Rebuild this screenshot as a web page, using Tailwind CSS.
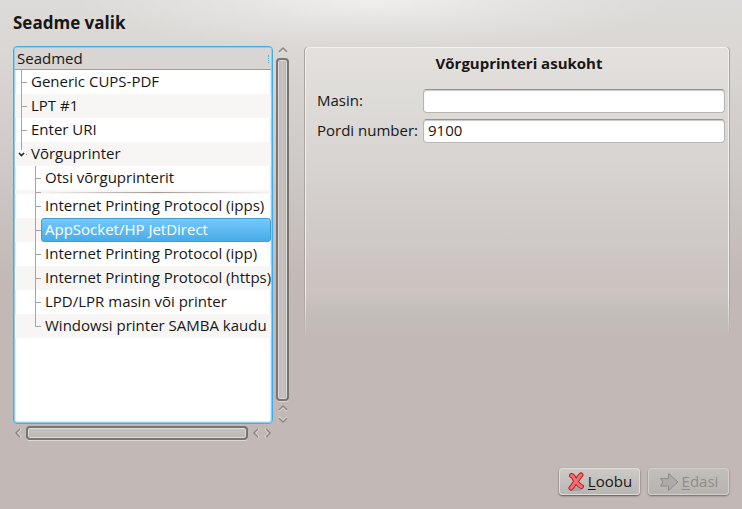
<!DOCTYPE html>
<html lang="et">
<head>
  <meta charset="UTF-8" />
  <meta name="viewport" content="width=device-width, initial-scale=1" />
  <title>Seadme valik</title>
  <script src="https://cdn.jsdelivr.net/npm/@tailwindcss/browser@4"></script>
  <style>
    body {
      font-family: 'Open Sans', 'Noto Sans', sans-serif;
      background:
        radial-gradient(ellipse 300px 50px at 50% 0, rgba(255, 255, 255, 0.55), rgba(255, 255, 255, 0.2) 55%, transparent),
        linear-gradient(#dddbd9 0, #dad7d4 50px, #cdc9c6 170px, #c2bab7 275px, #c2b9b7 300px);
    }
    .panel {
      background: linear-gradient(rgba(255, 255, 255, 0.24), rgba(255, 255, 255, 0.14) 85%, rgba(193, 192, 185, 0.6) 92%, rgba(193, 185, 183, 0));
    }
    .panel-edge {
      border: 1px solid #f1f0ef;
      box-shadow: -1px 0 0 #a9a4a1, 1px 0 0 #a9a4a1;
      -webkit-mask-image: linear-gradient(#000 85%, transparent);
      mask-image: linear-gradient(#000 85%, transparent);
      mask-clip: no-clip;
    }
    .thumb {
      border: 2px solid #7a7471;
      box-shadow: inset 0 0 0 1px #dddad8, 0 1px 0 #dedad9;
    }
    .btn {
      background: linear-gradient(#cdcac7, #b9b5b2);
      box-shadow: inset 0 0 0 1px #dedbd9, 0 1px 2px #57504d;
    }
    .btn:disabled {
      background: linear-gradient(#c3c0bc, #b6b2ae);
      box-shadow: inset 0 0 0 1px #d3cfcd, 0 1px 2px #6d6663;
    }
    .field {
      border: 1px solid #b9b5b2;
      border-top-color: #989390;
      box-shadow: inset 0 1px 1px #c9c7c5;
    }
  </style>
</head>
<body class="min-h-screen flex flex-col px-[13px] pt-2 pb-[14px] text-[15px] text-[#181615]">

  <!-- Shared icons -->
  <svg class="hidden">
    <symbol id="branch1" viewBox="0 0 12 24"><path d="M6.500 0V24M7 12.500H12" fill="none" stroke="#a9a4a1" /></symbol>
    <symbol id="branch1open" viewBox="0 0 12 24">
      <path d="M6.500 0V8" fill="none" stroke="#a9a4a1" />
      <path d="M4 11l2.500 2.500L9 11" fill="none" stroke="#2a2725" stroke-width="1.600" />
      <path d="M11 12.500h1" stroke="#a9a4a1" />
    </symbol>
    <symbol id="branch2" viewBox="0 0 26 24"><path d="M20.500 0V24M21 12.500H26" fill="none" stroke="#a9a4a1" /></symbol>
    <symbol id="branch2end" viewBox="0 0 26 24"><path d="M20.500 0V12.500H26" fill="none" stroke="#a9a4a1" /></symbol>
    <symbol id="chevron" viewBox="0 0 10 8">
      <path d="M1 7l4-4 4 4" fill="none" stroke="#e8e5e3" stroke-width="1.500" />
      <path d="M1 6l4-4 4 4" fill="none" stroke="#8b8582" stroke-width="1.500" />
    </symbol>
  </svg>

  <h1 class="h-[38px] text-[17px] leading-[30px] font-bold">Seadme valik</h1>

  <main class="flex-1 flex gap-4">

    <!-- Device tree with scroll bars -->
    <section class="w-[276px] shrink-0 flex flex-col">
      <div class="flex-1 flex gap-[3px]">
        <div class="flex-1 min-w-0 rounded-[4px] border border-[#3daee9] bg-white p-px shadow-[inset_0_0_0_1px_#8fcdf0,inset_0_0_1px_2px_#d5edfb] overflow-hidden">
          <div class="h-[22px] px-[2px] leading-5 bg-[#d8d5d3] border-b border-[#a39e9b] flex justify-between">
            <span>Seadmed</span>
            <span class="w-px h-2 mt-[7px] border-r border-dotted border-[#4eaee0]"></span>
          </div>
          <ul role="tree" aria-label="Seadmed" class="leading-[22px] whitespace-nowrap">
            <li role="treeitem" class="flex h-6"><svg class="w-3 h-6 shrink-0"><use href="#branch1" /></svg><span class="flex-1 pl-1">Generic CUPS-PDF</span></li>
            <li role="treeitem" class="flex h-6 bg-[#f7f6f5]"><svg class="w-3 h-6 shrink-0"><use href="#branch1" /></svg><span class="flex-1 pl-1">LPT #1</span></li>
            <li role="treeitem" class="flex h-6"><svg class="w-3 h-6 shrink-0"><use href="#branch1" /></svg><span class="flex-1 pl-1">Enter URI</span></li>
            <li role="treeitem" aria-expanded="true">
              <div class="flex h-6 bg-[#f7f6f5]"><svg class="w-3 h-6 shrink-0"><use href="#branch1open" /></svg><span class="flex-1 pl-1">Võrguprinter</span></div>
              <ul role="group">
                <li role="treeitem" class="flex h-6"><svg class="w-[26px] h-6 shrink-0"><use href="#branch2" /></svg><span class="flex-1 pl-1">Otsi võrguprinterit</span></li>
                <li role="separator" class="flex h-1 items-center bg-[#f7f6f5]">
                  <svg class="w-[26px] h-1 shrink-0"><path d="M20.500 0V4M21 2.500H26" fill="none" stroke="#a9a4a1" /></svg>
                  <span class="flex-1 h-px bg-linear-to-r from-transparent via-[#a39690] to-transparent"></span>
                </li>
                <li role="treeitem" class="flex h-6"><svg class="w-[26px] h-6 shrink-0"><use href="#branch2" /></svg><span class="flex-1 pl-1">Internet Printing Protocol (ipps)</span></li>
                <li role="treeitem" aria-selected="true" class="flex h-6 bg-[#f7f6f5]"><svg class="w-[26px] h-6 shrink-0"><use href="#branch2" /></svg><span class="flex-1 pl-[3px] leading-5 rounded-[3px] border border-[#3f9fd6] bg-linear-to-b from-[#74c8fc] to-[#48ace8] text-white">AppSocket/HP JetDirect</span></li>
                <li role="treeitem" class="flex h-6"><svg class="w-[26px] h-6 shrink-0"><use href="#branch2" /></svg><span class="flex-1 pl-1">Internet Printing Protocol (ipp)</span></li>
                <li role="treeitem" class="flex h-6 bg-[#f7f6f5]"><svg class="w-[26px] h-6 shrink-0"><use href="#branch2" /></svg><span class="flex-1 pl-1">Internet Printing Protocol (https)</span></li>
                <li role="treeitem" class="flex h-6"><svg class="w-[26px] h-6 shrink-0"><use href="#branch2" /></svg><span class="flex-1 pl-1">LPD/LPR masin või printer</span></li>
                <li role="treeitem" class="flex h-6 bg-[#f7f6f5]"><svg class="w-[26px] h-6 shrink-0"><use href="#branch2end" /></svg><span class="flex-1 pl-1">Windowsi printer SAMBA kaudu</span></li>
              </ul>
            </li>
          </ul>
        </div>

        <div class="w-[13px] flex flex-col items-center">
          <svg class="w-[10px] h-2 mb-1"><use href="#chevron" /></svg>
          <div class="thumb flex-1 w-full rounded-[4px] bg-linear-to-r from-[#bbb7b4] via-[#c6c3c0] to-[#bbb7b4]"></div>
          <svg class="w-[10px] h-2 mt-[3px]"><use href="#chevron" /></svg>
          <svg class="w-[10px] h-2 mt-1 rotate-180"><use href="#chevron" /></svg>
        </div>
      </div>

      <div class="w-[260px] h-[14px] mt-[2px] flex items-center">
        <svg class="w-[10px] h-2 -rotate-90"><use href="#chevron" /></svg>
        <div class="thumb flex-1 h-full mx-[3px] rounded-[4px] bg-linear-to-b from-[#c6c3c0] to-[#bbb7b4]"></div>
        <svg class="w-[10px] h-2 -rotate-90"><use href="#chevron" /></svg>
        <svg class="w-[10px] h-2 ml-[2px] rotate-90"><use href="#chevron" /></svg>
      </div>
    </section>

    <!-- Printer location -->
    <section class="panel relative flex-1 self-start min-h-[290px] mt-px rounded-t-[4px] pt-1 pl-3 pr-1">
      <div class="panel-edge absolute inset-0 rounded-t-[4px] border-b-0 pointer-events-none"></div>
      <h2 class="text-center font-bold leading-6 mb-[14px] pr-1">Võrguprinteri asukoht</h2>
      <form class="grid grid-cols-[auto_1fr] gap-x-[5px] gap-y-[6px] leading-[22px]">
        <label for="masin">Masin:</label>
        <input id="masin" type="text" class="field w-full min-w-0 h-6 px-1 pb-[2px] rounded-[4px] bg-white outline-none" />
        <label for="port">Pordi number:</label>
        <input id="port" type="text" value="9100" class="field w-full min-w-0 h-6 px-1 pb-[2px] rounded-[4px] bg-white outline-none" />
      </form>
    </section>
  </main>

  <footer class="mt-7 flex justify-end gap-2">
    <button type="button" class="btn w-[81px] h-[27px] flex items-center justify-center gap-[3px] rounded-[4px]">
      <svg class="w-[18px] h-[20px]" viewBox="0 0 18 20">
        <ellipse cx="9" cy="17" rx="7" ry="2" fill="#8f8986" opacity="0.500" />
        <path d="M4.500 3.500C7 4 7.500 8 9 9.500S11.500 13.500 14.500 14.500M14 3C11.500 5 11 7.500 9 9.500S6.500 13.500 4 16" fill="none" stroke="#b3202a" stroke-width="5" stroke-linecap="round" />
        <path d="M4.500 3.500C7 4 7.500 8 9 9.500S11.500 13.500 14.500 14.500M14 3C11.500 5 11 7.500 9 9.500S6.500 13.500 4 16" fill="none" stroke="#f66d70" stroke-width="3" stroke-linecap="round" />
      </svg>
      <span><span class="underline underline-offset-2">L</span>oobu</span>
    </button>
    <button type="button" disabled class="btn w-[81px] h-[27px] flex items-center justify-center gap-[3px] rounded-[4px] text-[#918c89]">
      <svg class="w-5 h-5" viewBox="0 0 20 20">
        <path d="M1.500 6.500H9.500V1.500L19 10 9.500 18.500V14H1.500L4 10Z" fill="#aeaaa7" stroke="#8f8b88" stroke-linejoin="round" />
      </svg>
      <span><span class="underline underline-offset-2">E</span>dasi</span>
    </button>
  </footer>

</body>
</html>
